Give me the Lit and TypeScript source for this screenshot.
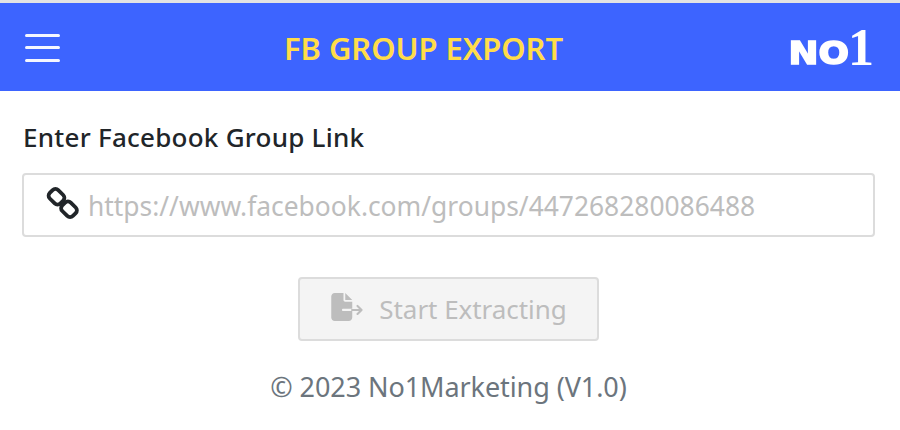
import { LitElement, css, html } from 'lit';
import { customElement } from 'lit/decorators.js';

@customElement('app-root')
export class AppRoot extends LitElement {
  static styles = css`
    :host {
      display: block;
      font-family: 'Noto Sans', 'Open Sans', sans-serif;
      background: #fff;
      min-height: 430px;
    }
    .topline { height: 3px; background: #e3e3e3; }
    .header {
      height: 88px;
      background: #3d64ff;
      display: flex;
      justify-content: space-between;
      align-items: center;
      padding: 0 26px 0 25px;
    }
    .menu { display: flex; flex-direction: column; gap: 9.5px; width: 35px; margin-top: 1px; filter: blur(0.5px); }
    .menu span { height: 3px; border-radius: 2px; background: #f4f6ff; }
    .title {
      color: #ffdc4a;
      font-size: 31px;
      font-weight: 600;
      margin-top: 1px;
      letter-spacing: -0.1px;
    }
    .logo {
      width: 87px;
      display: flex;
      align-items: flex-end;
      justify-content: flex-end;
      color: #fff;
      filter: blur(0.7px);
      line-height: 1;
      margin-top: 1px;
    }
    .logo .no {
      display: inline-block;
      font: 700 32px/32px 'DejaVu Sans', sans-serif;
      -webkit-text-stroke: 1.6px #fff;
      transform: scaleX(1.12);
      transform-origin: right bottom;
      margin-bottom: -2px;
    }
    .logo .one {
      font: 700 52px/38px 'Liberation Serif', serif;
      margin-left: -1px;
    }
    .main { padding: 28px 25px 0 22px; }
    .label {
      margin-left: 1px;
      font-size: 26px;
      font-weight: 500;
      line-height: 36px;
      color: #212529;
      letter-spacing: 0.25px;
    }
    .field {
      margin-top: 18px;
      height: 64px;
      box-sizing: border-box;
      border: 2px solid #dcdcdc;
      border-radius: 4px;
      display: flex;
      align-items: center;
      padding-left: 22px;
      gap: 8px;
    }
    .field svg { width: 34px; height: 34px; margin-top: -4px; flex: none; }
    .field .ph { color: #bdbdbd; font-size: 26.4px; margin-top: 1px; }
    .btn {
      margin: 40px auto 0;
      width: 301px;
      height: 64px;
      box-sizing: border-box;
      border: 2px solid #dcdcdc;
      border-radius: 4px;
      background: #f4f4f4;
      color: #bdbdbd;
      font-size: 26px;
      display: flex;
      align-items: center;
      justify-content: center;
      gap: 16px;
      letter-spacing: -0.05px;
    }
    .btn svg { width: 32px; height: 28px; fill: #bdbdbd; margin-top: -4px; margin-left: 1px; }
    .btn .arrow { fill: none; stroke: #bdbdbd; stroke-width: 38; stroke-linecap: round; stroke-linejoin: round; }
    .foot {
      margin-top: 27px;
      text-align: center;
      font-size: 27px;
      line-height: 38px;
      color: #6c757d;
      letter-spacing: -0.08px;
    }
  `;

  render() {
    return html`
      <div class="topline"></div>
      <header class="header">
        <div class="menu"><span></span><span></span><span></span></div>
        <div class="title">FB GROUP EXPORT</div>
        <div class="logo"><span class="no">NO</span><span class="one">1</span></div>
      </header>
      <main class="main">
        <div class="label">Enter Facebook Group Link</div>
        <div class="field">
          <svg viewBox="0 0 34 34" fill="none" stroke="#212529" stroke-width="3.8">
            <rect x="3" y="4.75" width="15" height="12" rx="4" transform="rotate(45 10.5 10.75)"></rect>
            <rect x="15.5" y="17.25" width="15" height="12" rx="4" transform="rotate(45 23 23.25)"></rect>
          </svg>
          <span class="ph">https://www.facebook.com/groups/447268280086488</span>
        </div>
        <div class="btn">
          <svg viewBox="0 0 576 512">
            <path d="M0 64C0 28.7 28.7 0 64 0H224V128c0 17.7 14.3 32 32 32H384V290H216c-11 0-20 9-20 20s9 20 20 20H384V448c0 35.3-28.7 64-64 64H64c-35.3 0-64-28.7-64-64V64zM384 128H256V0L384 128z"></path>
            <path class="arrow" d="M380 310H550M480 236L554 310L480 384"></path>
          </svg>
          <span>Start Extracting</span>
        </div>
        <div class="foot">© 2023 No1Marketing (V1.0)</div>
      </main>
    `;
  }
}
